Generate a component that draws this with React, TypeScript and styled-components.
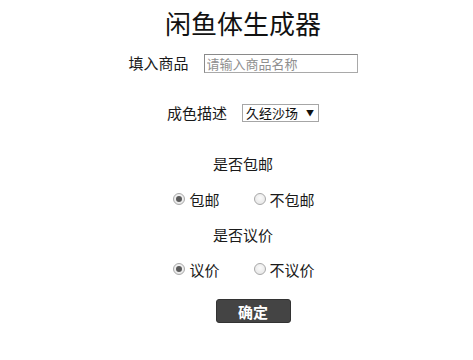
import React, { useState } from "react";
import styled, { createGlobalStyle } from "styled-components";

const GlobalStyle = createGlobalStyle`
  html, body {
    margin: 0;
    padding: 0;
    background: #fff;
  }
  body {
    font-family: "Noto Sans CJK SC", "Noto Sans", sans-serif;
    color: #1a1a1a;
  }
`;

const Page = styled.div`
  width: 473px;
  display: flex;
  flex-direction: column;
  align-items: center;
  padding-left: 13px;
  box-sizing: border-box;
`;

const Title = styled.h1`
  margin: 0;
  height: 46px;
  line-height: 46px;
  font-size: 26px;
  font-weight: 400;
  color: #111;
`;

const Row = styled.div<{ $top: number; $gap?: number }>`
  display: flex;
  align-items: center;
  height: 20px;
  margin-top: ${(p) => p.$top}px;
  gap: ${(p) => p.$gap ?? 15}px;
`;

const Label = styled.span`
  font-size: 15px;
  line-height: 20px;
  white-space: nowrap;
`;

const TextInput = styled.input`
  width: 154px;
  height: 19px;
  box-sizing: border-box;
  padding: 0 2px;
  font-family: inherit;
  font-size: 13px;
  border: 1px solid #a9a9a9;
  border-top-color: #8a8a8a;
  border-left-color: #8a8a8a;
  outline: none;

  &::placeholder {
    color: #8f8f8f;
  }
`;

const SelectWrap = styled.div`
  position: relative;
  width: 77px;
  height: 18px;
`;

const Select = styled.select`
  display: block;
  appearance: none;
  width: 100%;
  height: 100%;
  box-sizing: border-box;
  margin: 0;
  padding: 0 0 0 3px;
  font-family: inherit;
  font-size: 13px;
  line-height: 16px;
  color: #111;
  background: #fff;
  border: 1px solid #a6a6a6;
  border-radius: 0;
  outline: none;
`;

const Arrow = styled.span`
  position: absolute;
  right: 5px;
  top: 2px;
  font-size: 8px;
  line-height: 14px;
  color: #111;
  pointer-events: none;
`;

const RadioRow = styled(Row)`
  padding-left: 2px;
`;

const Option = styled.label`
  display: flex;
  align-items: center;
  gap: 4px;
  font-size: 15px;
  cursor: pointer;
`;

const Radio = styled.span<{ $checked: boolean }>`
  width: 12px;
  height: 12px;
  box-sizing: border-box;
  border-radius: 50%;
  border: 1px solid #a8a8a8;
  background: radial-gradient(circle at 50% 40%, #fafafa 0%, #e2e2e2 100%);
  display: flex;
  align-items: center;
  justify-content: center;

  &::after {
    content: "";
    width: 6px;
    height: 6px;
    border-radius: 50%;
    background: ${(p) => (p.$checked ? "#5a5a5a" : "transparent")};
  }
`;

const SubmitButton = styled.button`
  margin-top: 20px;
  margin-left: 20px;
  width: 75px;
  height: 24px;
  padding: 0;
  font-family: inherit;
  font-size: 15px;
  font-weight: 700;
  color: #fff;
  background: #444;
  border: 1px solid #333;
  border-radius: 3px;
  cursor: pointer;
`;

const RadioGroup = ({
  options,
  value,
  onChange,
  top,
}: {
  options: string[];
  value: string;
  onChange: (v: string) => void;
  top: number;
}) => (
  <RadioRow $top={top} $gap={34}>
    {options.map((opt) => (
      <Option key={opt} onClick={() => onChange(opt)}>
        <Radio $checked={value === opt} />
        {opt}
      </Option>
    ))}
  </RadioRow>
);

export default function App() {
  const [shipping, setShipping] = useState("包邮");
  const [bargain, setBargain] = useState("议价");

  return (
    <>
      <GlobalStyle />
      <Page>
        <Title>闲鱼体生成器</Title>
        <Row $top={7}>
          <Label>填入商品</Label>
          <TextInput placeholder="请输入商品名称" />
        </Row>
        <Row $top={30}>
          <Label>成色描述</Label>
          <SelectWrap>
            <Select defaultValue="久经沙场">
              <option>久经沙场</option>
              <option>全新</option>
              <option>九成新</option>
            </Select>
            <Arrow>▼</Arrow>
          </SelectWrap>
        </Row>
        <Row $top={31}>
          <Label>是否包邮</Label>
        </Row>
        <RadioGroup
          top={15}
          options={["包邮", "不包邮"]}
          value={shipping}
          onChange={setShipping}
        />
        <Row $top={16}>
          <Label>是否议价</Label>
        </Row>
        <RadioGroup
          top={14}
          options={["议价", "不议价"]}
          value={bargain}
          onChange={setBargain}
        />
        <SubmitButton>确定</SubmitButton>
      </Page>
    </>
  );
}
